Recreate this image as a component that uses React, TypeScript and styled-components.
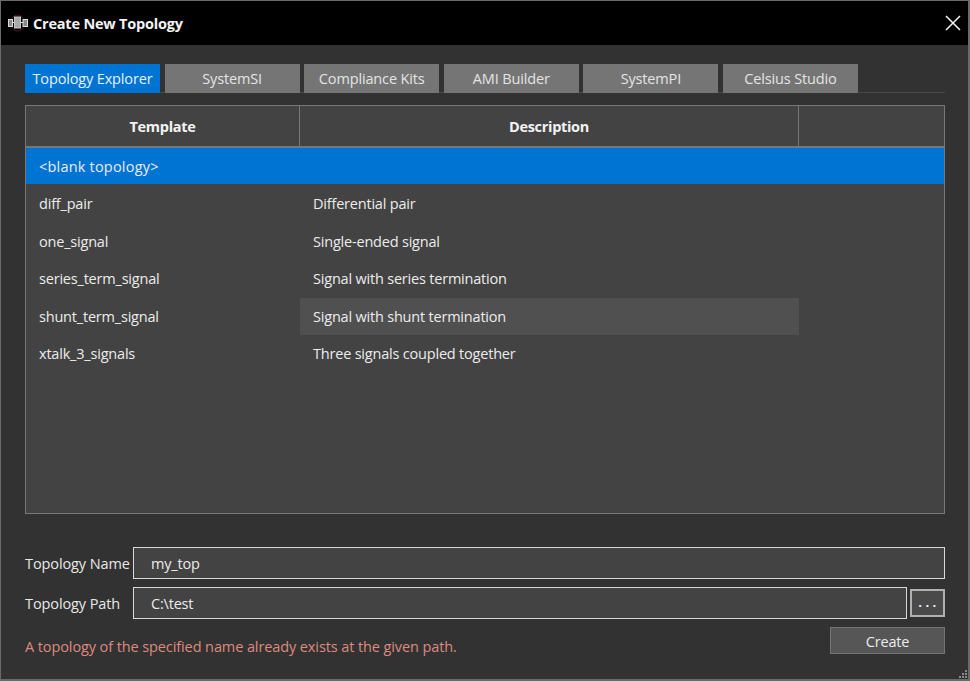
import React from 'react';
import styled, { createGlobalStyle } from 'styled-components';

const Global = createGlobalStyle`
  html, body {
    margin: 0;
    padding: 0;
    background: #333;
  }
  body {
    font-family: "Open Sans", "Noto Sans", sans-serif;
    font-size: 14.5px;
    color: #e8e8e8;
  }
`;

const Window = styled.div`
  position: relative;
  box-sizing: border-box;
  width: 970px;
  height: 681px;
  background: #323232;
  border: solid #6a6a6a;
  border-width: 1px 2px 2px 1px;
  display: flex;
  flex-direction: column;
  overflow: hidden;
`;

const TitleBar = styled.div`
  height: 44px;
  flex: none;
  background: #000;
  display: flex;
  align-items: center;
  padding: 0 7px 0 6px;
  gap: 4px;
`;

const Title = styled.div`
  flex: 1;
  color: #f4f4f4;
  font-weight: 700;
  font-size: 14.5px;
  letter-spacing: -0.2px;
`;

const Body = styled.div`
  flex: 1;
  display: flex;
  flex-direction: column;
  padding: 19px 23px 0 24px;
`;

const TabBar = styled.div`
  display: flex;
  height: 28px;
  gap: 4.6px;
  border-bottom: 1px solid #484848;
`;

const Tab = styled.div<{ $active?: boolean }>`
  width: 135px;
  height: 29px;
  display: flex;
  align-items: center;
  justify-content: center;
  background: ${(p) => (p.$active ? '#0074d3' : '#757575')};
  color: ${(p) => (p.$active ? '#e6f2fc' : '#e4e4e4')};
  letter-spacing: -0.15px;
`;

const Table = styled.div`
  box-sizing: border-box;
  margin-top: 12px;
  height: 409px;
  border: 1px solid #777;
  background: #434343;
`;

const HeaderRow = styled.div`
  display: grid;
  grid-template-columns: 273px 499px 1fr;
  height: 42px;
  border-bottom: 2px solid #777;
  box-sizing: border-box;
`;

const HeaderCell = styled.div`
  display: flex;
  align-items: center;
  justify-content: center;
  font-weight: 700;
  letter-spacing: -0.3px;
  color: #f2f2f2;
  & + & {
    border-left: 1px solid #777;
  }
`;

const Row = styled.div<{ $selected?: boolean }>`
  display: grid;
  grid-template-columns: 274px 499px 1fr;
  height: ${(p) => (p.$selected ? '36px' : '37.5px')};
  margin-bottom: ${(p) => (p.$selected ? '1px' : '0')};
  background: ${(p) => (p.$selected ? '#0074d3' : 'transparent')};
  letter-spacing: ${(p) => (p.$selected ? '0.2px' : '-0.2px')};
`;

const Cell = styled.div<{ $hover?: boolean }>`
  display: flex;
  align-items: center;
  padding-left: 13px;
  color: #ececec;
  background: ${(p) => (p.$hover ? '#505050' : 'transparent')};
`;

const Form = styled.div`
  margin-top: 33px;
  display: flex;
  flex-direction: column;
`;

const FieldRow = styled.div`
  display: flex;
  align-items: center;
  height: 32px;
  margin-bottom: 8px;
`;

const Label = styled.div`
  width: 108px;
  flex: none;
  letter-spacing: -0.1px;
  color: #e8e8e8;
`;

const Input = styled.input`
  flex: 1;
  min-width: 0;
  box-sizing: border-box;
  height: 32px;
  padding: 0 0 0 17px;
  background: #434343;
  border: 1px solid #d8d8d8;
  border-radius: 0;
  outline: none;
  color: #ececec;
  font: inherit;
  letter-spacing: -0.2px;
`;

const BrowseButton = styled.button`
  flex: none;
  box-sizing: border-box;
  width: 35px;
  height: 28px;
  margin-left: 3px;
  padding: 0 0 2px 3px;
  background: #4a4a4a;
  border: 2px solid #b0b0b0;
  border-radius: 0;
  color: #f2f2f2;
  font: inherit;
  font-weight: 700;
  font-size: 13px;
  letter-spacing: 3.5px;
`;

const Footer = styled.div`
  display: flex;
  justify-content: space-between;
  align-items: flex-end;
`;

const ErrorText = styled.div`
  letter-spacing: -0.1px;
  color: #dd8a7f;
  line-height: 14px;
`;

const CreateButton = styled.button`
  box-sizing: border-box;
  width: 115px;
  height: 27px;
  padding: 1px 0 0;
  background: #565656;
  border: 1px solid #747474;
  border-radius: 0;
  color: #ececec;
  font: inherit;
  letter-spacing: -0.2px;
`;

const Grip = styled.svg`
  position: absolute;
  right: 0;
  bottom: 0;
`;

const AppIcon = () => (
  <svg width="22" height="18" viewBox="0 0 22 18">
    <ellipse cx="10.5" cy="9" rx="7" ry="8" fill="none" stroke="#5f1c20" strokeWidth="0.8" />
    <path d="M5 8.5 H17" stroke="#e8e8e8" strokeWidth="1" />
    <rect x="1.5" y="5.5" width="4" height="7" fill="#8a8a8a" stroke="#dcdcdc" />
    <rect x="7.5" y="3" width="6" height="11" fill="#a8a8a8" stroke="#c8c8c8" />
    <rect x="16" y="5.5" width="4.5" height="7" fill="#8a8a8a" stroke="#dcdcdc" />
  </svg>
);

const CloseIcon = () => (
  <svg width="16" height="16" viewBox="0 0 16 16">
    <path d="M1 1 L15 15 M15 1 L1 15" stroke="#f4f4f4" strokeWidth="1.5" fill="none" />
  </svg>
);

const tabs = ['Topology Explorer', 'SystemSI', 'Compliance Kits', 'AMI Builder', 'SystemPI', 'Celsius Studio'];

const templates = [
  ['<blank topology>', ''],
  ['diff_pair', 'Differential pair'],
  ['one_signal', 'Single-ended signal'],
  ['series_term_signal', 'Signal with series termination'],
  ['shunt_term_signal', 'Signal with shunt termination'],
  ['xtalk_3_signals', 'Three signals coupled together'],
];

export default function App() {
  return (
    <>
      <Global />
      <Window>
        <TitleBar>
          <AppIcon />
          <Title>Create New Topology</Title>
          <CloseIcon />
        </TitleBar>
        <Body>
          <TabBar>
            {tabs.map((t, i) => (
              <Tab key={t} $active={i === 0}>
                {t}
              </Tab>
            ))}
          </TabBar>
          <Table>
            <HeaderRow>
              <HeaderCell>Template</HeaderCell>
              <HeaderCell>Description</HeaderCell>
              <HeaderCell />
            </HeaderRow>
            {templates.map(([name, desc], i) => (
              <Row key={name} $selected={i === 0}>
                <Cell>{name}</Cell>
                <Cell $hover={i === 4}>{desc}</Cell>
                <Cell />
              </Row>
            ))}
          </Table>
          <Form>
            <FieldRow>
              <Label>Topology Name</Label>
              <Input defaultValue="my_top" />
            </FieldRow>
            <FieldRow>
              <Label>Topology Path</Label>
              <Input defaultValue="C:\test" />
              <BrowseButton>...</BrowseButton>
            </FieldRow>
            <Footer>
              <ErrorText>A topology of the specified name already exists at the given path.</ErrorText>
              <CreateButton>Create</CreateButton>
            </Footer>
          </Form>
        </Body>
        <Grip width="9" height="9" viewBox="0 0 9 9">
          <g fill="#8a8a8a">
            <rect x="6" y="0" width="2" height="2" />
            <rect x="3" y="3" width="2" height="2" />
            <rect x="6" y="3" width="2" height="2" />
            <rect x="0" y="6" width="2" height="2" />
            <rect x="3" y="6" width="2" height="2" />
            <rect x="6" y="6" width="2" height="2" />
          </g>
        </Grip>
      </Window>
    </>
  );
}
